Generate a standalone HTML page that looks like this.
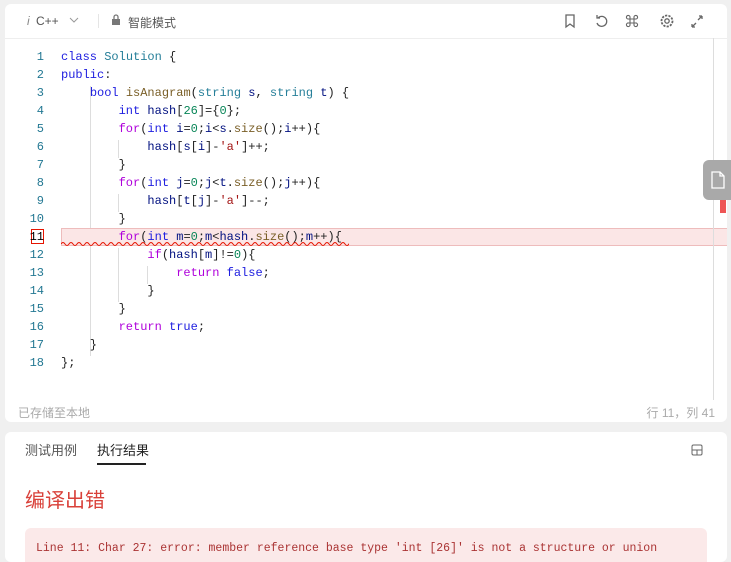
<!DOCTYPE html>
<html><head><meta charset="utf-8"><style>
body{margin:0;width:731px;height:550px;background:#f0f0f0;font-family:"Liberation Sans","Noto Sans CJK SC",sans-serif;overflow:hidden;position:relative}
.ed{position:absolute;left:5px;top:4px;width:722px;height:418px;background:#fff;border-radius:6px;overflow:hidden}
.tb{position:absolute;left:0;top:0;right:0;height:34px;border-bottom:1px solid #eee;font-size:12px;color:#555}
.code{position:absolute;left:0;top:44px;font-family:"Liberation Mono",monospace;font-size:12px;line-height:18px}
.ln{position:absolute;left:0;width:39px;text-align:right;color:#237893}
.l{position:absolute;left:56px;white-space:pre;color:#222}
.k{color:#2020e0}.c{color:#af00db}.t{color:#267f99}.n{color:#098658}.s{color:#a31515}.f{color:#795e26}.v{color:#001080}
.g{position:absolute;width:1px;background:#ddd}
.bp{position:absolute;left:5px;top:432px;width:722px;height:130px;background:#fff;border-radius:6px;overflow:hidden}
</style></head><body>
<div class="ed">
 <div class="tb">
  <span style="position:absolute;left:22px;top:10px;font-style:italic;color:#888">i</span>
  <span style="position:absolute;left:31px;top:10px">C++</span>
  <svg style="position:absolute;left:64px;top:12px" width="10" height="8"><path d="M1 2l4 4 4-4" stroke="#999" fill="none"/></svg>
  <span style="position:absolute;left:93px;top:10px;width:1px;height:14px;background:#e5e5e5"></span>
  <svg style="position:absolute;left:106px;top:10px" width="10" height="12"><rect x="1" y="5" width="8" height="6" fill="#777"/><path d="M3 5V3a2 2 0 0 1 4 0v2" stroke="#777" fill="none" stroke-width="1.3"/></svg>
  <span style="position:absolute;left:123px;top:10px">智能模式</span>
  <svg style="position:absolute;left:558px;top:9px" width="150" height="16" fill="none" stroke="#666" stroke-width="1.3">
   <path d="M3 2h8v12l-4-3-4 3z"/>
   <path d="M35 5a5 5 0 1 1 -1 5M34 2v3h3"/>
   <path d="M67 6h4v4h-4z M67 6h-1.5a1.8 1.8 0 1 1 1.5-1.5z M71 6v-1.5a1.8 1.8 0 1 1 1.5 1.5z M67 10v1.5a1.8 1.8 0 1 1 -1.5-1.5z M71 10h1.5a1.8 1.8 0 1 1 -1.5 1.5z" stroke-width="1.1"/>
   <circle cx="104" cy="8" r="2.2"/><circle cx="104" cy="8" r="5.5" stroke-dasharray="2.2 1.2" stroke-width="1.8"/>
   <path d="M129 14l4-4M129 14v-3M129 14h3M139 3l-4 4M139 3v3M139 3h-3"/>
  </svg>
 </div>
 <div class="g" style="left:85px;top:82px;height:270px"></div>
 <div class="g" style="left:113px;top:136px;height:18px"></div>
 <div class="g" style="left:113px;top:190px;height:18px"></div>
 <div class="g" style="left:113px;top:244px;height:54px"></div>
 <div class="g" style="left:142px;top:262px;height:18px"></div>
 <div style="position:absolute;left:56px;top:224px;width:666px;height:16px;background:#fbe6e6;border:1px solid #eebcbc"></div>
 <svg style="position:absolute;left:56px;top:237px" width="288" height="5"><path d="M0 3 q2-3 4 0 t4 0 t4 0 t4 0 t4 0 t4 0 t4 0 t4 0 t4 0 t4 0 t4 0 t4 0 t4 0 t4 0 t4 0 t4 0 t4 0 t4 0 t4 0 t4 0 t4 0 t4 0 t4 0 t4 0 t4 0 t4 0 t4 0 t4 0 t4 0 t4 0 t4 0 t4 0 t4 0 t4 0 t4 0 t4 0 t4 0 t4 0 t4 0 t4 0 t4 0 t4 0 t4 0 t4 0 t4 0 t4 0 t4 0 t4 0 t4 0 t4 0 t4 0 t4 0 t4 0 t4 0 t4 0 t4 0 t4 0 t4 0 t4 0 t4 0 t4 0 t4 0 t4 0 t4 0 t4 0 t4 0 t4 0 t4 0 t4 0 t4 0 t4 0 t4 0 t4 0 t4 0 t4 0" stroke="#e51400" fill="none" stroke-width="1"/></svg>
 <div style="position:absolute;left:26px;top:225px;width:11px;height:13px;border:1px solid #e51400"></div>
 <div class="code">
  <div class="ln" style="top:0">1</div><div class="l" style="top:0"><span class="k">class</span> <span class="t">Solution</span> {</div>
  <div class="ln" style="top:18px">2</div><div class="l" style="top:18px"><span class="k">public</span>:</div>
  <div class="ln" style="top:36px">3</div><div class="l" style="top:36px">    <span class="k">bool</span> <span class="f">isAnagram</span>(<span class="t">string</span> <span class="v">s</span>, <span class="t">string</span> <span class="v">t</span>) {</div>
  <div class="ln" style="top:54px">4</div><div class="l" style="top:54px">        <span class="k">int</span> <span class="v">hash</span>[<span class="n">26</span>]={<span class="n">0</span>};</div>
  <div class="ln" style="top:72px">5</div><div class="l" style="top:72px">        <span class="c">for</span>(<span class="k">int</span> <span class="v">i</span>=<span class="n">0</span>;<span class="v">i</span>&lt;<span class="v">s</span>.<span class="f">size</span>();<span class="v">i</span>++){</div>
  <div class="ln" style="top:90px">6</div><div class="l" style="top:90px">            <span class="v">hash</span>[<span class="v">s</span>[<span class="v">i</span>]-<span class="s">'a'</span>]++;</div>
  <div class="ln" style="top:108px">7</div><div class="l" style="top:108px">        }</div>
  <div class="ln" style="top:126px">8</div><div class="l" style="top:126px">        <span class="c">for</span>(<span class="k">int</span> <span class="v">j</span>=<span class="n">0</span>;<span class="v">j</span>&lt;<span class="v">t</span>.<span class="f">size</span>();<span class="v">j</span>++){</div>
  <div class="ln" style="top:144px">9</div><div class="l" style="top:144px">            <span class="v">hash</span>[<span class="v">t</span>[<span class="v">j</span>]-<span class="s">'a'</span>]--;</div>
  <div class="ln" style="top:162px">10</div><div class="l" style="top:162px">        }</div>
  <div class="ln" style="top:180px;color:#000">11</div><div class="l" style="top:180px">        <span class="c">for</span>(<span class="k">int</span> <span class="v">m</span>=<span class="n">0</span>;<span class="v">m</span>&lt;<span class="v">hash</span>.<span class="f">size</span>();<span class="v">m</span>++){</div>
  <div class="ln" style="top:198px">12</div><div class="l" style="top:198px">            <span class="c">if</span>(<span class="v">hash</span>[<span class="v">m</span>]!=<span class="n">0</span>){</div>
  <div class="ln" style="top:216px">13</div><div class="l" style="top:216px">                <span class="c">return</span> <span class="k">false</span>;</div>
  <div class="ln" style="top:234px">14</div><div class="l" style="top:234px">            }</div>
  <div class="ln" style="top:252px">15</div><div class="l" style="top:252px">        }</div>
  <div class="ln" style="top:270px">16</div><div class="l" style="top:270px">        <span class="c">return</span> <span class="k">true</span>;</div>
  <div class="ln" style="top:288px">17</div><div class="l" style="top:288px">    }</div>
  <div class="ln" style="top:306px">18</div><div class="l" style="top:306px">};</div>
 </div>
 <div style="position:absolute;left:708px;top:34px;width:1px;height:362px;background:#ddd"></div>
 <div style="position:absolute;left:715px;top:196px;width:6px;height:13px;background:#e55"></div>
 <div style="position:absolute;left:13px;top:400px;font-size:12px;color:#aaa">已存储至本地</div>
 <div style="position:absolute;right:12px;top:400px;font-size:12px;color:#aaa">行 11，列 41</div>
</div>
<div style="position:absolute;left:703px;top:160px;width:28px;height:40px;background:#a9a9a9;border-radius:6px 0 0 6px"><svg style="position:absolute;left:8px;top:11px" width="14" height="18"><path d="M1 1h8l4 4v12H1z M9 1v4h4" stroke="#fff" fill="none" stroke-width="1.3"/></svg></div>
<div class="bp">
 <div style="position:absolute;left:20px;top:8px;font-size:13px;color:#555">测试用例</div>
 <div style="position:absolute;left:92px;top:8px;font-size:13px;color:#222">执行结果</div>
 <div style="position:absolute;left:92px;top:31px;width:49px;height:2px;background:#222"></div>
 <svg style="position:absolute;left:686px;top:12px" width="12" height="12"><rect x="1" y="1" width="10" height="10" rx="1.5" stroke="#666" fill="none"/><path d="M1 6h10M6 6v5" stroke="#666"/></svg>
 <div style="position:absolute;left:20px;top:52px;font-size:20px;color:#d9413a">编译出错</div>
 <div style="position:absolute;left:20px;top:96px;width:682px;height:40px;background:#fbe9e9;border-radius:6px;overflow:hidden"><div style="position:absolute;left:11px;top:14px;font-family:'Liberation Mono',monospace;font-size:11.5px;color:#a33;white-space:nowrap">Line 11: Char 27: error: member reference base type 'int [26]' is not a structure or union</div></div>
</div>
</body></html>
